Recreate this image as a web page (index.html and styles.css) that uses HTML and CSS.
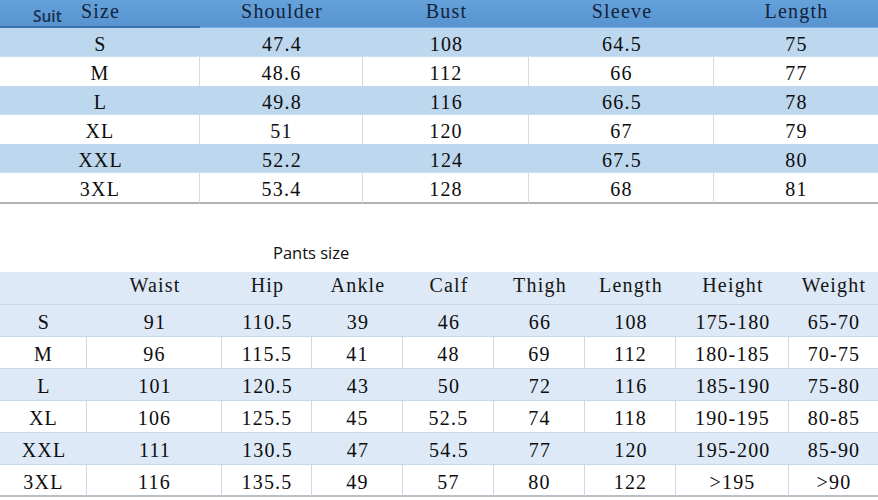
FILE: index.html
```html
<!DOCTYPE html>
<html lang="en">
<head>
<meta charset="utf-8">
<title>Suit and pants size chart</title>
<link rel="stylesheet" href="styles.css">
</head>
<body>
<div class="sheet">
  <table class="suit">
    <colgroup>
      <col class="c200"><col class="c163"><col class="c166"><col class="c185"><col class="c164">
    </colgroup>
    <thead>
      <tr>
        <th class="first"><span class="suit-label">Suit</span>Size</th>
        <th>Shoulder</th>
        <th>Bust</th>
        <th>Sleeve</th>
        <th>Length</th>
      </tr>
    </thead>
    <tbody>
      <tr class="blue"><td>S</td><td>47.4</td><td>108</td><td>64.5</td><td>75</td></tr>
      <tr class="white"><td>M</td><td>48.6</td><td>112</td><td>66</td><td>77</td></tr>
      <tr class="blue"><td>L</td><td>49.8</td><td>116</td><td>66.5</td><td>78</td></tr>
      <tr class="white"><td>XL</td><td>51</td><td>120</td><td>67</td><td>79</td></tr>
      <tr class="blue"><td>XXL</td><td>52.2</td><td>124</td><td>67.5</td><td>80</td></tr>
      <tr class="white last"><td>3XL</td><td>53.4</td><td>128</td><td>68</td><td>81</td></tr>
    </tbody>
  </table>

  <div class="caption">Pants size</div>

  <table class="pants">
    <colgroup>
      <col class="p87"><col class="p135"><col class="p90"><col class="p91"><col class="p91"><col class="p91"><col class="p91"><col class="p113"><col class="p89">
    </colgroup>
    <thead>
      <tr>
        <th></th><th>Waist</th><th>Hip</th><th>Ankle</th><th>Calf</th><th>Thigh</th><th>Length</th><th>Height</th><th>Weight</th>
      </tr>
    </thead>
    <tbody>
      <tr class="lblue"><td>S</td><td>91</td><td>110.5</td><td>39</td><td>46</td><td>66</td><td>108</td><td>175-180</td><td>65-70</td></tr>
      <tr class="white"><td>M</td><td>96</td><td>115.5</td><td>41</td><td>48</td><td>69</td><td>112</td><td>180-185</td><td>70-75</td></tr>
      <tr class="lblue"><td>L</td><td>101</td><td>120.5</td><td>43</td><td>50</td><td>72</td><td>116</td><td>185-190</td><td>75-80</td></tr>
      <tr class="white"><td>XL</td><td>106</td><td>125.5</td><td>45</td><td>52.5</td><td>74</td><td>118</td><td>190-195</td><td>80-85</td></tr>
      <tr class="lblue"><td>XXL</td><td>111</td><td>130.5</td><td>47</td><td>54.5</td><td>77</td><td>120</td><td>195-200</td><td>85-90</td></tr>
      <tr class="white last"><td>3XL</td><td>116</td><td>135.5</td><td>49</td><td>57</td><td>80</td><td>122</td><td>&gt;195</td><td>&gt;90</td></tr>
    </tbody>
  </table>
</div>
</body>
</html>
```
FILE: styles.css
```css
html, body {
  margin: 0;
  padding: 0;
  background: #ffffff;
}

body {
  font-family: "Liberation Serif", "DejaVu Serif", serif;
  color: #0d0d0d;
  overflow: hidden;
}

.sheet {
  width: 878px;
}

table {
  width: 878px;
  border-collapse: separate;
  border-spacing: 0;
  table-layout: fixed;
}

th, td {
  padding: 0 0 0 1px;
  text-align: center;
  vertical-align: top;
  font-weight: normal;
  font-size: 20px;
  letter-spacing: 1.2px;
  white-space: nowrap;
  box-sizing: border-box;
}

/* column widths */
.c200 { width: 200px; }
.c163 { width: 163px; }
.c166 { width: 166px; }
.c185 { width: 185px; }
.c164 { width: 164px; }

.p87 { width: 87px; }
.p135 { width: 135px; }
.p90 { width: 90px; }
.p91 { width: 91px; }
.p113 { width: 113px; }
.p89 { width: 89px; }

/* ---------- suit table ---------- */
.suit th {
  height: 28px;
  background: linear-gradient(#65a2da, #5794d0);
  color: #14223a;
  line-height: 22px;
  border-bottom: 1px solid #78ade0;
}

.suit th.first {
  position: relative;
  border-bottom: 2px solid #3a74ad;
}

.suit-label {
  position: absolute;
  left: 33px;
  top: 6px;
  font-family: "Open Sans", "Noto Sans", sans-serif;
  font-size: 15.5px;
  font-weight: 600;
  letter-spacing: 0;
  line-height: 20px;
  color: #17304f;
}

.suit td {
  height: 29px;
  line-height: 24px;
  padding-top: 4px;
}

.suit .blue td {
  background: #bdd7ee;
  border-bottom: 1px solid #cbdff1;
}

.suit .white td {
  background: #ffffff;
  border-right: 1px solid #dadada;
}

.suit .white td:last-child {
  border-right: 0;
}

.suit .last td {
  height: 31px;
  border-bottom: 2px solid #b3b3b3;
}

/* ---------- caption ---------- */
.caption {
  height: 68px;
  box-sizing: border-box;
  padding-top: 38px;
  padding-left: 273px;
  font-family: "Open Sans", "Noto Sans", sans-serif;
  font-size: 16.5px;
  line-height: 22px;
  color: #111111;
}

/* ---------- pants table ---------- */
.pants th {
  height: 33px;
  background: #dde9f6;
  color: #151515;
  line-height: 24px;
  padding-top: 1px;
  border-bottom: 1px solid #c9d9eb;
}

.pants td {
  height: 32px;
  line-height: 24px;
  padding-top: 5px;
  border-bottom: 1px solid #c9d9eb;
}

.pants .lblue td {
  background: #dde9f6;
}

.pants .white td {
  background: #ffffff;
  border-right: 1px solid #d2d9e2;
}

.pants .white td:last-child {
  border-right: 0;
}

.pants .last td {
  border-bottom: 2px solid #b9bfc7;
}
```
